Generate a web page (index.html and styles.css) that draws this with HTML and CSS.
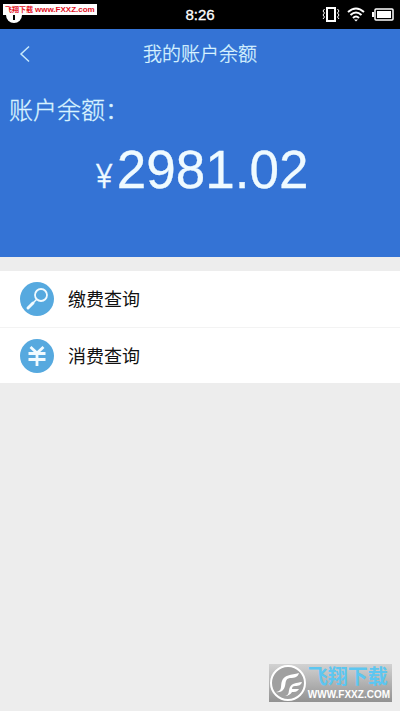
FILE: index.html
```html
<!DOCTYPE html>
<html lang="zh-CN">
<head>
<meta charset="utf-8">
<meta name="viewport" content="width=device-width, initial-scale=1">
<title>我的账户余额</title>
<link rel="stylesheet" href="styles.css">
</head>
<body>
<div class="status">
  <span class="notice"><svg width="16" height="16" viewBox="0 0 16 16" aria-hidden="true"><circle cx="8" cy="8" r="8" fill="#fff"/><path d="M8 8v5" stroke="#000" stroke-width="2"/></svg></span>
  <time class="clock">8:26</time>
  <div class="indicators">
    <svg width="18" height="18" viewBox="0 0 18 18" fill="none" stroke="#fff" aria-hidden="true"><rect x="5" y="2" width="8" height="13" stroke-width="2"/><path d="M2.500 3l-1.500 2 1.500 2-1.500 2 1.500 2-1.500 2M15.500 3l1.500 2-1.500 2 1.500 2-1.500 2 1.500 2"/></svg>
    <svg width="18" height="16" viewBox="0 0 18 16" fill="none" stroke="#fff" stroke-width="2" aria-hidden="true"><path d="M1 5Q9-2 17 5M3.500 8Q9 3 14.500 8M6 11Q9 8 12 11"/><path d="M7 12.500h4l-2 2z" fill="#fff" stroke="none"/></svg>
    <svg width="22" height="14" viewBox="0 0 22 14" aria-hidden="true"><path d="M0 4h2v5H0z" fill="#fff"/><rect x="3" y="1" width="18" height="11" rx="1" fill="none" stroke="#fff" stroke-width="1.500"/><path d="M5 3h14v7H5z" fill="#fff"/></svg>
  </div>
  <a class="tag" href="#"><b class="tag-name">飞翔下载</b><b>www.FXXZ.com</b></a>
</div>
<header class="hero">
  <nav class="nav">
    <button class="back" type="button" aria-label="返回"><svg width="12" height="18" viewBox="0 0 12 18" fill="none" stroke="#c8eafb" stroke-width="1.500" aria-hidden="true"><path d="M10 1.500L2 9l8 7.500"/></svg></button>
    <h1 class="title">我的账户余额</h1>
  </nav>
  <p class="label">账户余额：</p>
  <p class="amount"><span class="currency">¥</span><span>2981.02</span></p>
</header>
<main class="menu">
  <a class="row" href="#">
    <svg class="icon" width="34" height="34" viewBox="0 0 34 34" fill="none" stroke="#f2fbff" aria-hidden="true"><circle cx="17" cy="17" r="17" fill="#56a9df" stroke="none"/><circle cx="21" cy="13" r="6" stroke-width="1.800"/><path d="M16.500 17.500l-3 3" stroke-width="1.500"/><path d="M13 21l-5 5" stroke-width="3" stroke-linecap="round"/></svg>
    <span>缴费查询</span>
  </a>
  <a class="row" href="#">
    <svg class="icon" width="34" height="34" viewBox="0 0 34 34" fill="none" stroke="#f2fbff" stroke-width="2.800" aria-hidden="true"><circle cx="17" cy="17" r="17" fill="#56a9df" stroke="none"/><path d="M10.500 8l6.500 6 6.500-6M17 13.500v13.500M8.500 14.500h17M8.500 20.500h17"/></svg>
    <span>消费查询</span>
  </a>
</main>
<aside class="mark">
  <svg width="38" height="38" viewBox="0 0 38 38" aria-hidden="true"><circle cx="19" cy="19" r="17" fill="#a0a0a0" stroke="#fff" stroke-width="2"/><path d="M7 28c7-1 4-6 6-11 2-6 9-6 17-8-1 4-4 5-9 5-5 1-4 4-5 8s-4 7-9 6z" fill="#fff"/><path d="M16 32c5-1 3-5 5-9 2-4 6-4 12-5-1 3-3 4-7 4-2 0-3 1-3 3h7c-2 3-4 3-7 3-1 2-4 4-7 4z" fill="#fff"/></svg>
  <div class="mark-text"><b class="mark-name">飞翔下载</b><b class="mark-url">WWW.FXXZ.COM</b></div>
</aside>
</body>
</html>
```
FILE: styles.css
```css
* {
  box-sizing: border-box;
}

body {
  display: flex;
  flex-direction: column;
  min-height: 100vh;
  margin: 0;
  background: #ededed;
  color: #111;
  font-family: "Liberation Sans", "Noto Sans CJK SC", sans-serif;
}

h1,
p {
  margin: 0;
  font-weight: 400;
}

a {
  color: inherit;
  text-decoration: none;
}

svg {
  display: block;
  flex: none;
}

.status {
  position: relative;
  display: grid;
  grid-template-columns: 1fr auto 1fr;
  align-items: center;
  height: 29px;
  padding: 0 6px;
  background: #000;
  color: #fff;
}

.clock {
  font-size: 15px;
  line-height: 28px;
  -webkit-text-stroke: 0.3px #fff;
}

.indicators {
  display: flex;
  align-items: center;
  justify-content: flex-end;
  gap: 7px;
}

.tag {
  position: absolute;
  top: 4px;
  left: 3px;
  display: flex;
  align-items: center;
  gap: 2px;
  height: 11px;
  padding: 0 2px;
  background: #fff;
  color: #e3101c;
  font-size: 8px;
  line-height: 11px;
  white-space: nowrap;
}

.tag-name {
  font-size: 7px;
}

.hero {
  height: 228px;
  background: #3473d5;
  color: #effaff;
}

.nav {
  display: grid;
  grid-template-columns: 40px 1fr 40px;
  align-items: center;
  height: 50px;
}

.back {
  display: flex;
  justify-content: flex-end;
  padding: 0 9px 0 0;
  border: 0;
  background: none;
}

.title {
  padding-top: 2px;
  color: #d9f3ff;
  font-size: 19px;
  font-weight: 300;
  line-height: 28px;
  text-align: center;
  -webkit-text-stroke: 0.3px #d9f3ff;
}

.label {
  padding: 14px 9px 0;
  color: #d9f3ff;
  font-size: 24px;
  font-weight: 300;
  line-height: 36px;
  -webkit-text-stroke: 0.3px #d9f3ff;
}

.amount {
  display: flex;
  align-items: baseline;
  justify-content: center;
  gap: 4px;
  padding: 9px 0 0 4px;
  font-size: 53px;
  line-height: 64px;
  -webkit-text-stroke: 0.3px #effaff;
}

.currency {
  font-family: Inter, sans-serif;
  font-size: 32px;
  font-weight: 300;
}

.menu {
  margin-top: 14px;
  background: #fff;
}

.row {
  display: flex;
  align-items: center;
  gap: 14px;
  height: 56px;
  padding: 0 20px;
  font-size: 18px;
  line-height: 28px;
}

.row span {
  padding-top: 2px;
}

.row + .row {
  border-top: 1px solid #f3f3f3;
}

.mark {
  display: flex;
  align-items: center;
  align-self: flex-end;
  height: 38px;
  margin: auto 8px 9px 0;
  background: linear-gradient(#d2d2d2, #929292);
}

.mark-text {
  display: flex;
  flex-direction: column;
  padding: 0 2px 0 1px;
}

.mark-name {
  color: #5cc6f0;
  font-size: 20px;
  line-height: 24px;
}

.mark-url {
  color: #fff;
  font-family: "Liberation Sans", sans-serif;
  font-size: 10px;
  line-height: 12px;
}
```
